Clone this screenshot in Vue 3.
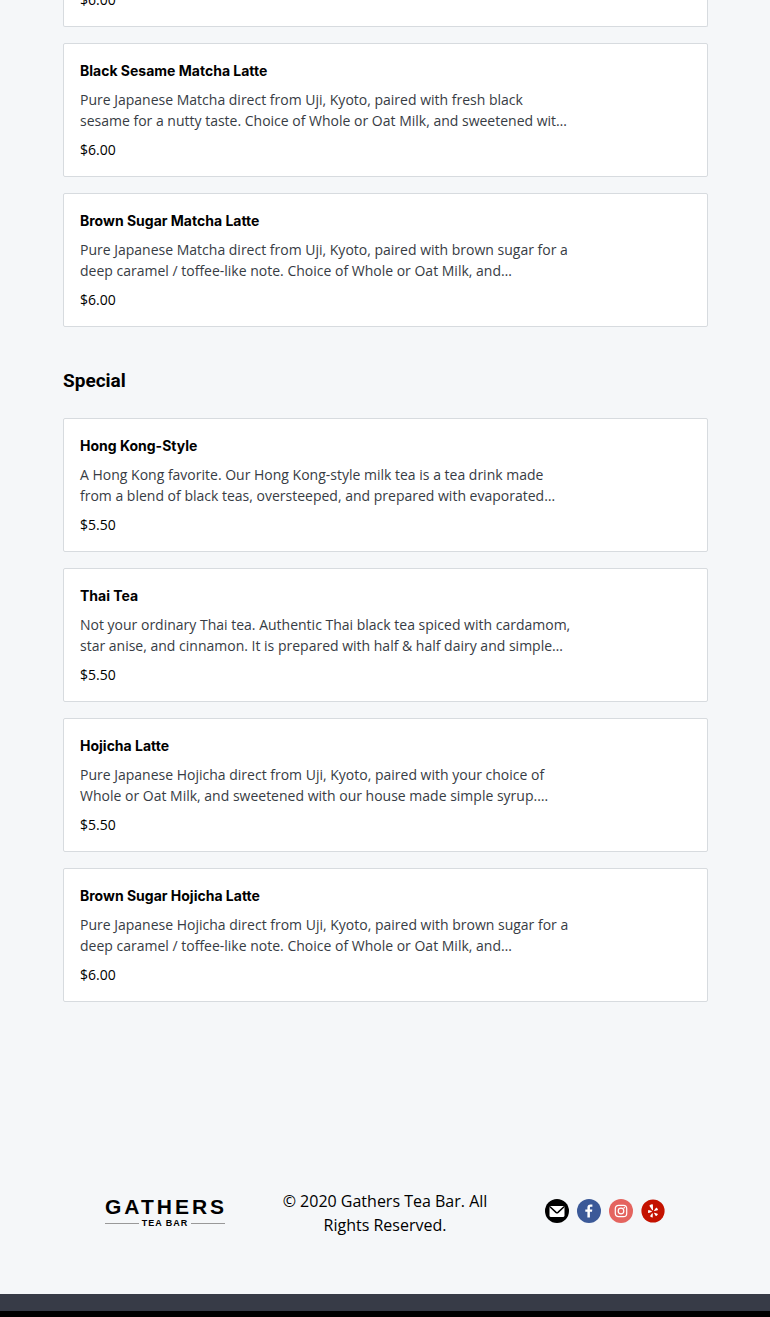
<script setup>
const matcha = [
  {
    name: 'Black Sesame Matcha Latte',
    lines: [
      'Pure Japanese Matcha direct from Uji, Kyoto, paired with fresh black',
      'sesame for a nutty taste. Choice of Whole or Oat Milk, and sweetened wit…',
    ],
    price: '$6.00',
  },
  {
    name: 'Brown Sugar Matcha Latte',
    lines: [
      'Pure Japanese Matcha direct from Uji, Kyoto, paired with brown sugar for a',
      'deep caramel / toffee-like note. Choice of Whole or Oat Milk, and…',
    ],
    price: '$6.00',
  },
]

const special = [
  {
    name: 'Hong Kong-Style',
    lines: [
      'A Hong Kong favorite. Our Hong Kong-style milk tea is a tea drink made',
      'from a blend of black teas, oversteeped, and prepared with evaporated…',
    ],
    price: '$5.50',
  },
  {
    name: 'Thai Tea',
    lines: [
      'Not your ordinary Thai tea. Authentic Thai black tea spiced with cardamom,',
      'star anise, and cinnamon. It is prepared with half & half dairy and simple…',
    ],
    price: '$5.50',
  },
  {
    name: 'Hojicha Latte',
    lines: [
      'Pure Japanese Hojicha direct from Uji, Kyoto, paired with your choice of',
      'Whole or Oat Milk, and sweetened with our house made simple syrup.…',
    ],
    price: '$5.50',
  },
  {
    name: 'Brown Sugar Hojicha Latte',
    lines: [
      'Pure Japanese Hojicha direct from Uji, Kyoto, paired with brown sugar for a',
      'deep caramel / toffee-like note. Choice of Whole or Oat Milk, and…',
    ],
    price: '$6.00',
  },
]
</script>

<template>
  <div class="page">
    <main class="menu">
      <section class="items">
        <article class="card card-tail">
          <p class="price">$6.00</p>
        </article>
        <article v-for="item in matcha" :key="item.name" class="card">
          <h3 class="name">{{ item.name }}</h3>
          <p class="desc">
            <span v-for="line in item.lines" :key="line" class="line">{{ line }}</span>
          </p>
          <p class="price">{{ item.price }}</p>
        </article>
      </section>

      <h2 class="heading">Special</h2>
      <section class="items">
        <article v-for="item in special" :key="item.name" class="card">
          <h3 class="name">{{ item.name }}</h3>
          <p class="desc">
            <span v-for="line in item.lines" :key="line" class="line">{{ line }}</span>
          </p>
          <p class="price">{{ item.price }}</p>
        </article>
      </section>
    </main>

    <footer class="footer">
      <a href="#" class="logo" aria-label="Gathers Tea Bar">
        <span class="logo-name">GATHERS</span>
        <span class="logo-sub">TEA BAR</span>
      </a>
      <p class="copyright">© 2020 Gathers Tea Bar. All Rights Reserved.</p>
      <nav class="social" aria-label="Social links">
        <a href="#" aria-label="Email">
          <svg viewBox="0 0 24 24" width="24" height="24">
            <circle cx="12" cy="12" r="12" fill="#000" />
            <rect x="4.5" y="7" width="15" height="11" rx="1.6" fill="#fff" />
            <path d="M5 7.8 L11 13.4 Q12 14.2 13 13.4 L19 7.8" fill="none" stroke="#000" stroke-width="1.5" />
          </svg>
        </a>
        <a href="#" aria-label="Facebook">
          <svg viewBox="0 0 24 24" width="24" height="24">
            <circle cx="12" cy="12" r="12" fill="#3b5998" />
            <path d="M10.4 18.6v-5.8H8.3v-2.4h2.1V8.6c0-2.1 1.2-3.2 3.1-3.2.9 0 1.7.1 1.9.1v2.2h-1.3c-1 0-1.2.5-1.2 1.2v1.5h2.4l-.3 2.4h-2.1v5.8z" fill="#fff" />
          </svg>
        </a>
        <a href="#" aria-label="Instagram">
          <svg viewBox="0 0 24 24" width="24" height="24">
            <circle cx="12" cy="12" r="12" fill="#e4645f" />
            <rect x="6.3" y="6.3" width="11.4" height="11.4" rx="3.2" fill="none" stroke="#fff" stroke-width="1.2" />
            <circle cx="12" cy="12" r="2.8" fill="none" stroke="#fff" stroke-width="1.2" />
            <circle cx="15.3" cy="8.7" r=".8" fill="#fff" />
          </svg>
        </a>
        <a href="#" aria-label="Yelp">
          <svg viewBox="0 0 24 24" width="24" height="24">
            <circle cx="12" cy="12" r="11.6" fill="#c41200" />
            <g fill="#fff">
              <path d="M8.7 6.2c.8-.6 1.7-.9 2.6-1 .4 0 .6.2.6.6l.1 5c0 .6-.6.7-.9.3L8.5 6.9c-.1-.3 0-.5.2-.7z" />
              <path d="M7.7 11l2.8 1.1c.5.2.5.8 0 1l-2.8.8c-.4.1-.6-.1-.6-.5-.1-.8 0-1.5.2-2.1.1-.3.2-.4.4-.3z" />
              <path d="M11.8 14.8l-.1 3.1c0 .4-.3.6-.6.5-.7-.2-1.3-.5-1.8-1-.3-.2-.2-.5 0-.7l1.6-2.2c.4-.4.9-.2.9.3z" />
              <path d="M13.6 13.7l2.9 1c.4.1.5.4.3.7-.4.6-.9 1.1-1.4 1.5-.3.2-.6.1-.8-.2l-1.5-2.4c-.2-.4.1-.8.5-.6z" />
              <path d="M13.1 11.4l1.8-2.5c.2-.3.5-.3.8-.1.5.5 1 1.1 1.2 1.8.1.3 0 .5-.4.6l-2.9.8c-.5.1-.8-.2-.5-.6z" />
            </g>
          </svg>
        </a>
      </nav>
    </footer>
    <div class="strip"></div>
    <div class="base"></div>
  </div>
</template>

<style>
body {
  margin: 0;
  background: #f5f7f9;
}
</style>

<style scoped>
.page {
  overflow: hidden;
  font-family: "Open Sans", "Liberation Sans", sans-serif;
  color: #000;
}
h2, h3, p {
  margin: 0;
}
.menu {
  margin-top: -11px;
  padding: 0 62px 0 63px;
}
.items {
  display: flex;
  flex-direction: column;
  gap: 16px;
}
.card {
  display: flex;
  flex-direction: column;
  gap: 8px;
  padding: 16px;
  background: #fff;
  border: 1px solid #d7dbdf;
  border-radius: 2px;
  font-size: 14px;
  line-height: 21px;
}
.card-tail {
  padding-top: 0;
  border-top: 0;
}
.name {
  font-family: Inter, "Liberation Sans", sans-serif;
  font-size: 14px;
  font-weight: 700;
}
.desc {
  color: #373c44;
}
.line {
  display: block;
  white-space: nowrap;
}
.heading {
  margin: 40px 0 23px;
  font-family: Roboto, "Liberation Sans", sans-serif;
  font-size: 19px;
  line-height: 28px;
  font-weight: 700;
}
.footer {
  display: flex;
  align-items: center;
  justify-content: space-between;
  padding: 187px 105px 57px;
}
.logo {
  display: flex;
  flex-direction: column;
  width: 120px;
  color: #000;
  text-decoration: none;
  font-family: "Liberation Sans", sans-serif;
  font-weight: 700;
}
.logo-name {
  font-size: 21px;
  line-height: 20px;
  letter-spacing: 3px;
}
.logo-sub {
  display: flex;
  align-items: center;
  gap: 3px;
  font-size: 9px;
  line-height: 12px;
  letter-spacing: 1px;
  white-space: nowrap;
}
.logo-sub::before,
.logo-sub::after {
  content: "";
  flex: 1;
  height: 1px;
  background: #999;
}
.copyright {
  width: 216px;
  font-size: 16px;
  line-height: 24px;
  text-align: center;
}
.social {
  display: flex;
  gap: 8px;
  padding-bottom: 4px;
}
.social a {
  display: block;
  height: 24px;
}
.social svg {
  display: block;
}
.strip {
  height: 17px;
  background: #373b47;
}
.base {
  height: 6px;
  background: #000;
}
</style>
